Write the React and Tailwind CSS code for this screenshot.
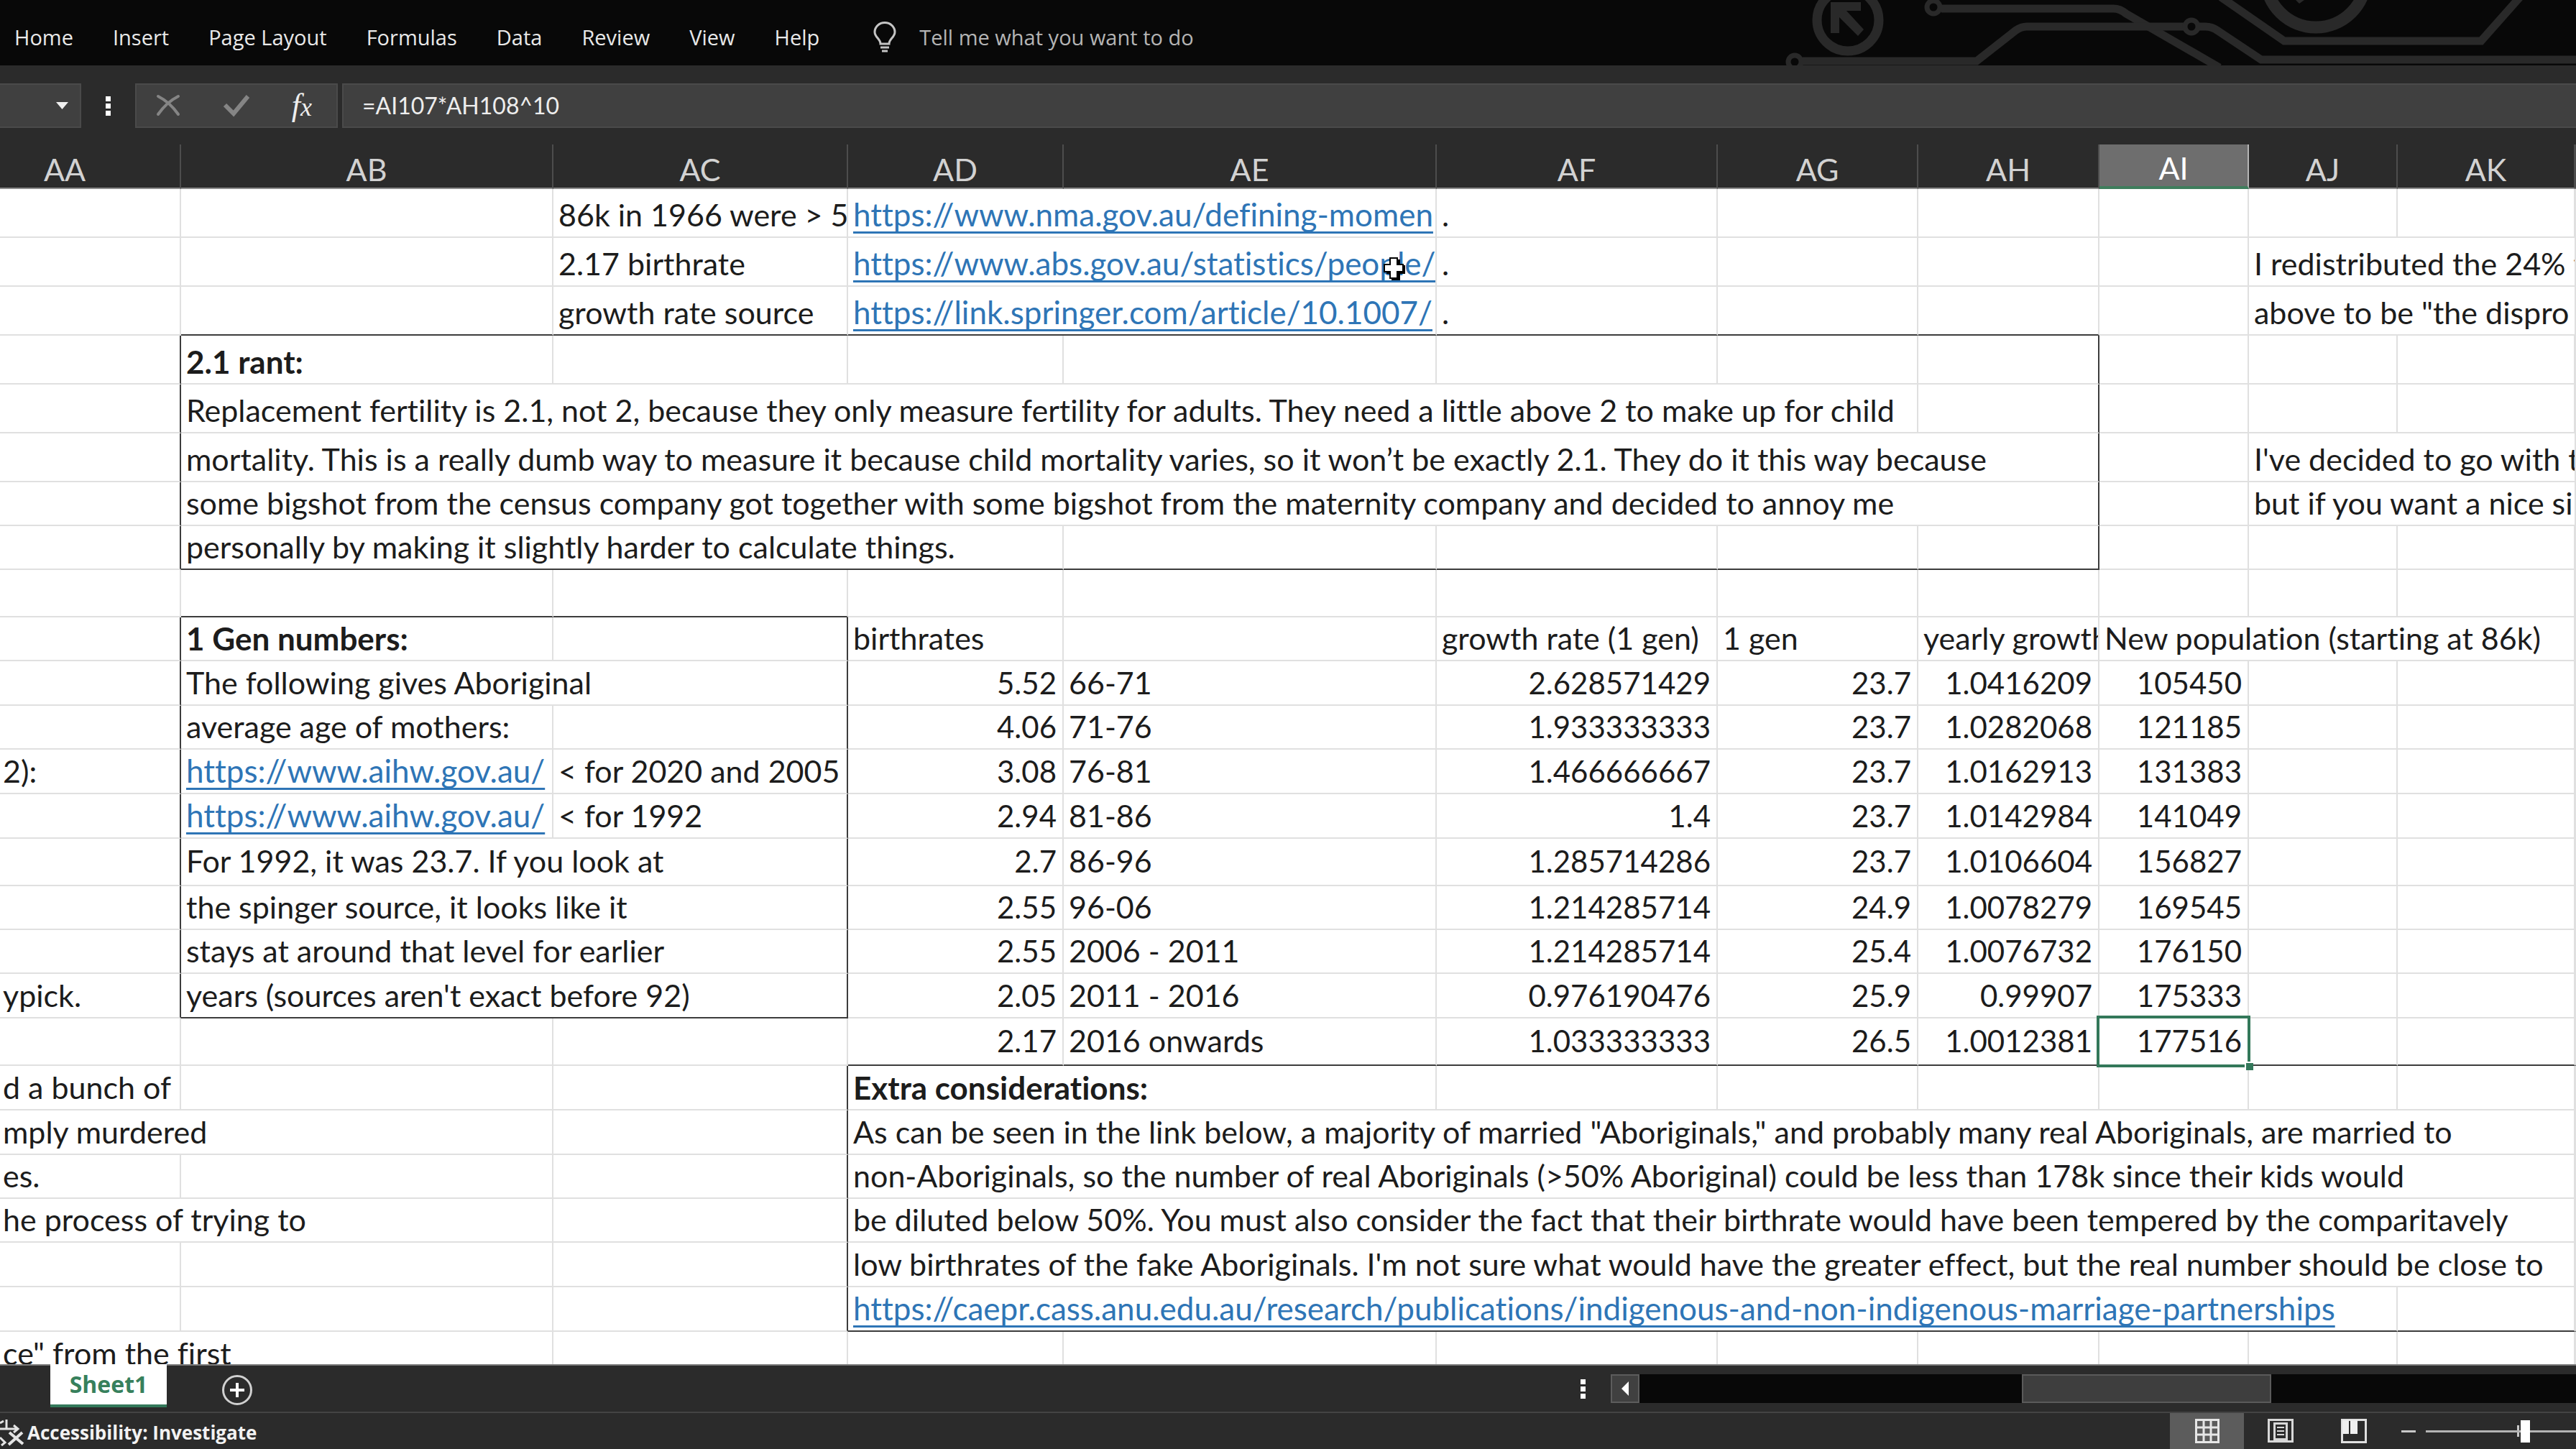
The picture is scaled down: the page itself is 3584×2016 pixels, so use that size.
import React, { useState } from 'react';
import clsx from 'clsx';

const menus = ['Home', 'Insert', 'Page Layout', 'Formulas', 'Data', 'Review', 'View', 'Help'];

const columns = [
  { name: 'AA', width: 'w-[252px]' },
  { name: 'AB', width: 'w-[518px]' },
  { name: 'AC', width: 'w-[410px]' },
  { name: 'AD', width: 'w-[300px]' },
  { name: 'AE', width: 'w-[519px]' },
  { name: 'AF', width: 'w-[391px]' },
  { name: 'AG', width: 'w-[279px]' },
  { name: 'AH', width: 'w-[252px]' },
  { name: 'AI', width: 'w-[208px]' },
  { name: 'AJ', width: 'w-[207px]' },
  { name: 'AK', width: 'w-[247px]' },
  { name: '', width: '' },
];

const TALL = 'h-[68px]';
const MID = 'h-[66px] [&>td]:pb-2';
const ROW = 'h-[62px]';
const LOW = 'h-[61px]';

// cell helpers: r / b turn the right / bottom gridline into a box border
const _ = {};
const R = { r: true };
const B = { b: true };
const text = (t, span = 1, rest = {}) => ({ t, span, ...rest });
const num = (t, rest = {}) => ({ t, num: true, ...rest });
const link = (href, span = 1, rest = {}) => ({ t: href, href, span, ...rest });

const rates = (birth, years, growth, gen, yearly, population) => [
  num(birth), text(years), num(growth), num(gen), num(yearly), num(population), _, _, _,
];

const rows = [
  { h: TALL, cells: [_, _, text('86k in 1966 were > 50'), link('https://www.nma.gov.au/defining-momen', 2), text('.'), _, _, _, _, _, _] },
  { h: TALL, cells: [_, _, text('2.17 birthrate'), link('https://www.abs.gov.au/statistics/people/', 2), text('.'), _, _, _, text('I redistributed the 24% t', 3)] },
  { h: TALL, cells: [_, B, text('growth rate source', 1, B), link('https://link.springer.com/article/10.1007/', 2, B), text('.', 1, B), B, B, _, text('above to be "the dispro', 3)] },
  { h: TALL, cells: [R, text('2.1 rant:', 1, { bold: true }), _, _, _, _, _, R, _, _, _, _] },
  { h: TALL, cells: [R, text('Replacement fertility is 2.1, not 2, because they only measure fertility for adults. They need a little above 2 to make up for child', 6), R, _, _, _, _] },
  { h: TALL, cells: [R, text('mortality. This is a really dumb way to measure it because child mortality varies, so it won’t be exactly 2.1. They do it this way because', 7, R), _, text("I've decided to go with t", 3)] },
  { h: LOW, cells: [R, text('some bigshot from the census company got together with some bigshot from the maternity company and decided to annoy me', 7, R), _, text('but if you want a nice si', 3)] },
  { h: LOW, cells: [R, text('personally by making it slightly harder to calculate things.', 3, B), B, B, B, { r: true, b: true }, _, _, _, _] },
  { h: MID, cells: [_, B, B, _, _, _, _, _, _, _, _, _] },
  { h: LOW, cells: [R, text('1 Gen numbers:', 1, { bold: true }), R, text('birthrates'), _, text('growth rate (1 gen)'), text('1 gen'), text('yearly growth'), text('New population (starting at 86k)', 3), _] },
  { h: ROW, cells: [R, text('The following gives Aboriginal', 2, R), ...rates('5.52', '66-71', '2.628571429', '23.7', '1.0416209', '105450')] },
  { h: LOW, cells: [R, text('average age of mothers:'), R, ...rates('4.06', '71-76', '1.933333333', '23.7', '1.0282068', '121185')] },
  { h: ROW, cells: [text('2):', 1, { r: true, cut: true }), link('https://www.aihw.gov.au/'), text('< for 2020 and 2005', 1, R), ...rates('3.08', '76-81', '1.466666667', '23.7', '1.0162913', '131383')] },
  { h: ROW, cells: [R, link('https://www.aihw.gov.au/'), text('< for 1992', 1, R), ...rates('2.94', '81-86', '1.4', '23.7', '1.0142984', '141049')] },
  { h: MID, cells: [R, text('For 1992, it was 23.7. If you look at', 2, R), ...rates('2.7', '86-96', '1.285714286', '23.7', '1.0106604', '156827')] },
  { h: LOW, cells: [R, text('the spinger source, it looks like it', 2, R), ...rates('2.55', '96-06', '1.214285714', '24.9', '1.0078279', '169545')] },
  { h: LOW, cells: [R, text('stays at around that level for earlier', 2, R), ...rates('2.55', '2006 - 2011', '1.214285714', '25.4', '1.0076732', '176150')] },
  { h: ROW, cells: [text('ypick.', 1, { r: true, cut: true }), text("years (sources aren't exact before 92)", 2, { r: true, b: true }), ...rates('2.05', '2011 - 2016', '0.976190476', '25.9', '0.99907', '175333')] },
  { h: MID, cells: [_, _, _, num('2.17', B), text('2016 onwards', 1, B), num('1.033333333', B), num('26.5', B), num('1.0012381', B), num('177516', { b: true, selected: true }), B, B, B] },
  { h: ROW, cells: [text('d a bunch of', 1, { cut: true }), _, R, text('Extra considerations:', 2, { bold: true }), _, _, _, _, _, _, _] },
  { h: ROW, cells: [text('mply murdered', 2, { cut: true }), R, text('As can be seen in the link below, a majority of married "Aboriginals," and probably many real Aboriginals, are married to', 8), _] },
  { h: LOW, cells: [text('es.', 1, { cut: true }), _, R, text('non-Aboriginals, so the number of real Aboriginals (>50% Aboriginal) could be less than 178k since their kids would', 8), _] },
  { h: LOW, cells: [text('he process of trying to', 2, { cut: true }), R, text('be diluted below 50%. You must also consider the fact that their birthrate would have been tempered by the comparitavely', 8), _] },
  { h: ROW, cells: [_, _, R, text("low birthrates of the fake Aboriginals. I'm not sure what would have the greater effect, but the real number should be close to", 8), _] },
  { h: ROW, cells: [_, _, R, link('https://caepr.cass.anu.edu.au/research/publications/indigenous-and-non-indigenous-marriage-partnerships', 7, B), B, B] },
  { h: ROW, cells: [text('ce" from the first', 2, { cut: true }), _, _, _, _, _, _, _, _, _, _] },
];

const Cell = ({ t, span, num, bold, href, cut, selected, r, b }) => (
  <td
    colSpan={span}
    className={clsx(
      'border-r-2 border-b-2 pt-0 pb-[5px] align-bottom whitespace-nowrap leading-[50px]',
      r ? 'border-r-[#3c3c3c]' : 'border-r-[#e0e0e0]',
      b ? 'border-b-[#3c3c3c]' : 'border-b-[#e0e0e0]',
      num ? 'pr-2 text-right text-[42px]' : bold ? 'text-[44px] font-bold' : 'text-[43px]',
      cut ? 'pl-1' : 'pl-[7px]',
      selected ? 'relative' : 'overflow-hidden'
    )}
  >
    {href ? (
      <a href={href} className="text-[44px] text-[#2e75b6] underline decoration-[3px] underline-offset-[7px] [text-decoration-skip-ink:none]">
        {t}
      </a>
    ) : t}
    {selected && (
      <>
        <span className="absolute -inset-1 border-4 border-[#33785a]"></span>
        <span className="absolute -right-2 -bottom-2 h-3 w-3 border-t-2 border-l-2 border-white bg-[#33785a]"></span>
      </>
    )}
  </td>
);

const Dots = () => (
  <span className="flex flex-col gap-[3px]">
    <span className="h-[7px] w-[7px] bg-white"></span>
    <span className="h-[7px] w-[7px] bg-white"></span>
    <span className="h-[7px] w-[7px] bg-white"></span>
  </span>
);

const Circuit = () => (
  <svg className="h-[91px] w-[1144px] shrink-0" viewBox="0 0 1144 91" fill="none" stroke="#292929" strokeWidth="11">
    <circle cx="131" cy="28" r="43" strokeWidth="13" />
    <path d="M107 3H149V15H129L153 41L145 50L119 24V46H107Z" fill="#292929" stroke="none" />
    <circle cx="250" cy="10" r="9" strokeWidth="7" />
    <path d="M261 12H500Q510 12 518 19L648 94" />
    <circle cx="57" cy="86" r="9" strokeWidth="7" />
    <path d="M68 85H310L365 42Q372 37 380 37H598" />
    <circle cx="609" cy="37" r="9" strokeWidth="7" />
    <path d="M620 37H628Q638 37 646 43L706 83H1144" />
    <path d="M650 -4L738 57H1012L1066 -4" />
    <circle cx="782" cy="-32" r="70" strokeWidth="17" />
    <path d="M754 0H766L759 5Z" fill="#292929" stroke="none" />
  </svg>
);

const Bulb = () => (
  <svg className="h-[44px] w-[32px]" viewBox="0 0 32 44" fill="none" stroke="#c4c4c4" strokeWidth="3">
    <path d="M10 31C10 24 2 22 2 14.500A14 13 0 0 1 30 14.500C30 22 22 24 22 31Z" />
    <path d="M10 36H22M12 41H20" />
  </svg>
);

export default function App() {
  const [formula, setFormula] = useState('=AI107*AH108^10');
  const [zoom, setZoom] = useState(109);

  return (
    <div className="flex h-screen flex-col overflow-hidden bg-[#2b2b2b] font-['Lato','Liberation_Sans',sans-serif] text-[#1c1c1c] [font-variant-ligatures:none]">
      {/* Ribbon tabs */}
      <header className="flex h-[91px] shrink-0 items-center justify-between overflow-hidden bg-[#080808] font-['Open_Sans','Noto_Sans',sans-serif] text-[29px] text-[#e8e8e8]">
        <nav className="flex items-center gap-[55px] pt-3 pl-5 whitespace-nowrap">
          {menus.map((m) => (
            <button key={m}>{m}</button>
          ))}
          <button className="ml-5 flex items-center gap-8 text-[#b4b4b4]">
            <Bulb />
            Tell me what you want to do
          </button>
        </nav>
        <Circuit />
      </header>

      {/* Formula bar */}
      <div className="flex h-[110px] shrink-0 pt-[25px] pb-[23px]">
        <div className="flex w-[113px] items-center justify-end border-2 border-l-0 border-[#4a4a4a] bg-[#404040] pr-4">
          <button aria-label="Name box">
            <svg className="h-[10px] w-[17px]" viewBox="0 0 17 10"><path d="M0 0H17L8.500 10Z" fill="#f0f0f0" /></svg>
          </button>
        </div>
        <div className="flex w-[75px] items-center justify-center">
          <Dots />
        </div>
        <div className="mr-1.5 flex w-[282px] items-center justify-between border-2 border-[#4a4a4a] bg-[#404040] pr-[34px] pl-[26px]">
          <button aria-label="Cancel">
            <svg className="h-[34px] w-[36px]" viewBox="0 0 36 34" fill="none" stroke="#858585" strokeLinecap="round">
              <path d="M4 4Q20 12 32 29" strokeWidth="4" />
              <path d="M32 4Q16 12 4 29" strokeWidth="4" />
            </svg>
          </button>
          <button aria-label="Enter">
            <svg className="h-[34px] w-[36px]" viewBox="0 0 36 34" fill="none" stroke="#858585" strokeWidth="6">
              <path d="M2 16L14 28L34 4" />
            </svg>
          </button>
          <button aria-label="Insert function" className="font-['Liberation_Serif',serif] text-[44px] leading-none text-[#eeeeee] italic">
            f<span className="text-[36px]">x</span>
          </button>
        </div>
        <input
          aria-label="Formula"
          className="min-w-0 flex-1 border-2 border-r-0 border-[#4a4a4a] bg-[#404040] pl-[26px] text-[32px] text-[#ededed] outline-none"
          value={formula}
          onChange={(e) => setFormula(e.target.value)}
        />
      </div>

      {/* Grid */}
      <main className="relative min-h-0 flex-1 overflow-hidden bg-white">
        <table className="w-full table-fixed border-separate border-spacing-0">
          <thead>
            <tr className="h-[62px] bg-[#2b2b2b] text-[43px] leading-[50px] text-[#d2d2d2]">
              {columns.map((c) => (
                <th
                  key={c.name}
                  className={clsx(
                    c.width,
                    'border-r-2 p-0 text-center align-bottom font-normal',
                    c.name === 'AI'
                      ? 'border-b-4 border-r-[#b5b5b5] border-b-[#3f7d5c] bg-[#6e6e6e] text-white'
                      : 'border-b-2 border-r-[#4d4d4d] border-b-[#8c8c8c]',
                    c.name === 'AA' && 'pr-[70px]'
                  )}
                >
                  {c.name}
                </th>
              ))}
            </tr>
          </thead>
          <tbody>
            {rows.map((row, i) => (
              <tr key={i} className={row.h}>
                {row.cells.map((cell, j) => (
                  <Cell key={j} {...cell} />
                ))}
              </tr>
            ))}
          </tbody>
        </table>
        {/* Mouse pointer */}
        <svg className="absolute top-[156px] left-[1924px] h-[34px] w-[32px]" viewBox="0 0 32 34">
          <path d="M12 4H24V12H31V24H24V33H12V24H5V12H12Z" fill="#000" />
          <path d="M10 2H20V11H28V21H20V30H10V21H2V11H10Z" fill="#fff" stroke="#000" strokeWidth="2" />
        </svg>
      </main>

      {/* Sheet tabs and horizontal scroll bar */}
      <div className="flex h-[66px] shrink-0 border-t-2 border-[#7c7c7c]">
        <div className="flex w-[61.3%] pl-[70px]">
          <button className="-mt-0.5 h-[60px] w-[162px] border-b-4 border-[#33785a] bg-white font-['Open_Sans','Noto_Sans',sans-serif] text-[32px] leading-[50px] font-bold text-[#37805c]">
            Sheet1
          </button>
          <button aria-label="New sheet" className="mt-3 ml-[76px] self-start">
            <svg className="h-[44px] w-[44px]" viewBox="0 0 44 44" fill="none" stroke="#d0d0d0" strokeWidth="3">
              <circle cx="22" cy="22" r="19.500" />
              <path d="M22 12V32M12 22H32" stroke="#fff" strokeWidth="4" />
            </svg>
          </button>
        </div>
        <div className="flex min-w-0 flex-1 items-center gap-[35px] pl-0.5">
          <Dots />
          <div className="flex h-[40px] min-w-0 flex-1 bg-[#080808]">
            <button aria-label="Scroll left" className="flex w-[40px] shrink-0 items-center justify-center border-2 border-[#5c5c5c] bg-[#404040]">
              <svg className="h-[20px] w-[10px]" viewBox="0 0 10 20"><path d="M10 0V20L0 10Z" fill="#fff" /></svg>
            </button>
            <div className="ml-[532px] w-[347px] shrink-0 border-2 border-[#5a5a5a] bg-[#3e3e3e]"></div>
          </div>
        </div>
      </div>

      {/* Status bar */}
      <footer className="flex h-[52px] shrink-0 justify-between overflow-hidden border-t-2 border-[#444444] font-['Open_Sans','Noto_Sans',sans-serif] text-[26px] font-bold text-[#f2f2f2]">
        <button className="flex items-center gap-1 pt-1">
          <svg className="h-[40px] w-[34px]" viewBox="0 0 34 40" fill="none" stroke="#e4e4e4" strokeWidth="3">
            <path d="M0 7L5 4M9 2V16M0 15H24M19 10L25 15L19 20M0 27L7 34L2 38" />
            <path d="M13 20L32 36M31 20L12 37" strokeWidth="4" />
          </svg>
          Accessibility: Investigate
        </button>
        <div className="-mr-[47px] flex items-center">
          <button aria-label="Normal view" className="flex h-full w-[103px] items-center justify-center bg-[#5c5c5c]">
            <svg className="h-[34px] w-[34px]" viewBox="0 0 34 34" fill="none" stroke="#e6e6e6" strokeWidth="3">
              <path d="M1.500 1.500H32.500V32.500H1.500ZM1.500 12H32.500M1.500 22H32.500M12 1.500V32.500M22 1.500V32.500" />
            </svg>
          </button>
          <button aria-label="Page layout view" className="flex w-[102px] items-center justify-center">
            <svg className="h-[34px] w-[36px]" viewBox="0 0 36 34" fill="none" stroke="#d8d8d8" strokeWidth="3">
              <path d="M1.500 1.500H34.500V31.500H1.500ZM9.500 6.500H26.500V28.500H9.500Z" />
              <path d="M13 12H23M13 17H23M13 22H23" strokeWidth="2" />
            </svg>
          </button>
          <button aria-label="Page break view" className="flex w-[102px] items-center justify-center">
            <svg className="h-[34px] w-[36px]" viewBox="0 0 36 34" fill="none" stroke="#e0e0e0" strokeWidth="3">
              <path d="M1.500 1.500H34.500V32.500H1.500Z" />
              <path d="M2 2H11V21H2ZM13 2H23V21H13Z" fill="#efefef" stroke="none" />
            </svg>
          </button>
          <button aria-label="Zoom out" className="ml-[15px] h-[3px] w-5 bg-[#c8c8c8]"></button>
          <div className="relative ml-[14px] flex items-center">
            <span className="absolute left-[127px] h-4 w-[3px] bg-[#c8c8c8]"></span>
            <input
              type="range"
              aria-label="Zoom"
              min="0"
              max="200"
              value={zoom}
              onChange={(e) => setZoom(Number(e.target.value))}
              className="relative h-8 w-[256px] appearance-none bg-transparent [&::-webkit-slider-runnable-track]:h-[3px] [&::-webkit-slider-runnable-track]:bg-[#b4b4b4] [&::-webkit-slider-thumb]:-mt-[14px] [&::-webkit-slider-thumb]:h-[31px] [&::-webkit-slider-thumb]:w-[13px] [&::-webkit-slider-thumb]:appearance-none [&::-webkit-slider-thumb]:bg-white"
            />
          </div>
        </div>
      </footer>
    </div>
  );
}
